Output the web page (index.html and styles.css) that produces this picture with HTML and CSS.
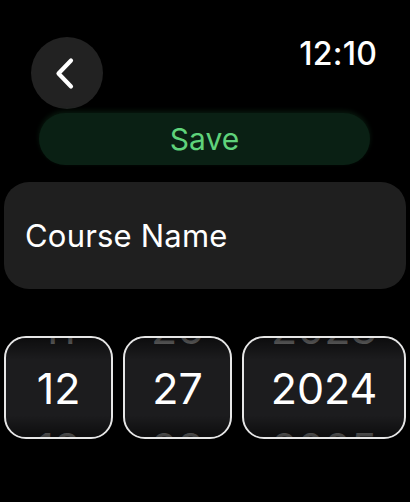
FILE: index.html
```html
<!DOCTYPE html>
<html>
<head>
<meta charset="utf-8">
<link rel="stylesheet" href="styles.css">
</head>
<body>
<div class="screen">
  <div class="header">
    <div class="back">
      <svg width="72" height="72" viewBox="0 0 72 72"><path d="M40 23.5 L27.5 36.5 L40 49.5" fill="none" stroke="#fff" stroke-width="4.2" stroke-linecap="round" stroke-linejoin="round"/></svg>
    </div>
    <div class="time">12:10</div>
  </div>
  <div class="save">Save</div>
  <div class="card">Course Name</div>
  <div class="pickers">
    <div class="picker p-sm"><div class="wheel"><span class="dim">11</span><span>12</span><span class="dim">13</span></div></div>
    <div class="picker p-sm"><div class="wheel"><span class="dim">26</span><span>27</span><span class="dim">28</span></div></div>
    <div class="picker p-lg"><div class="wheel"><span class="dim">2023</span><span>2024</span><span class="dim">2025</span></div></div>
  </div>
</div>
</body>
</html>
```
FILE: styles.css
```css
html, body { margin: 0; padding: 0; background: #000; }
body { width: 410px; height: 502px; overflow: hidden; font-family: Inter, "Noto Sans", sans-serif; color: #fff; }
.screen { display: flex; flex-direction: column; }
.header { display: flex; justify-content: space-between; align-items: flex-start; padding: 37px 33px 0 31px; height: 73px; }
.back { width: 72px; height: 72px; border-radius: 50%; background: #222222; }
.back svg { display: block; }
.time { font-size: 32px; font-weight: 500; line-height: 30px; margin-top: 2px; letter-spacing: 0.2px; }
.save { margin: 3px 40px 0 39px; height: 52px; border-radius: 26px; background: #0a2014; color: #5fd37b; font-size: 30px; line-height: 52px; text-align: center; box-shadow: 0 -2px 5px rgba(30, 90, 50, 0.28); }
.card { margin: 17px 4px 0 4px; height: 107px; border-radius: 25px; background: #1f1f1f; display: flex; align-items: center; padding-left: 21px; font-size: 31px; letter-spacing: 0.2px; }
.pickers { display: flex; gap: 10px; margin: 47px 4px 0 4px; }
.picker { height: 99px; border: 2px solid #e6e6e6; border-radius: 22px; background: #1c1c1e; overflow: hidden; display: flex; flex-direction: column; align-items: center; justify-content: center; position: relative; }
.p-sm { width: 105px; }
.p-lg { width: 160px; }
.picker::after { content: ""; position: absolute; inset: 0; background: linear-gradient(to bottom, rgba(0,0,0,0.55) 0%, rgba(0,0,0,0) 22%, rgba(0,0,0,0) 78%, rgba(0,0,0,0.55) 100%); pointer-events: none; }
.wheel { display: flex; flex-direction: column; align-items: center; padding-top: 1px; }
.wheel span { font-size: 43px; line-height: 60px; height: 60px; }
.wheel .dim { color: #8a8a8a; }
```
